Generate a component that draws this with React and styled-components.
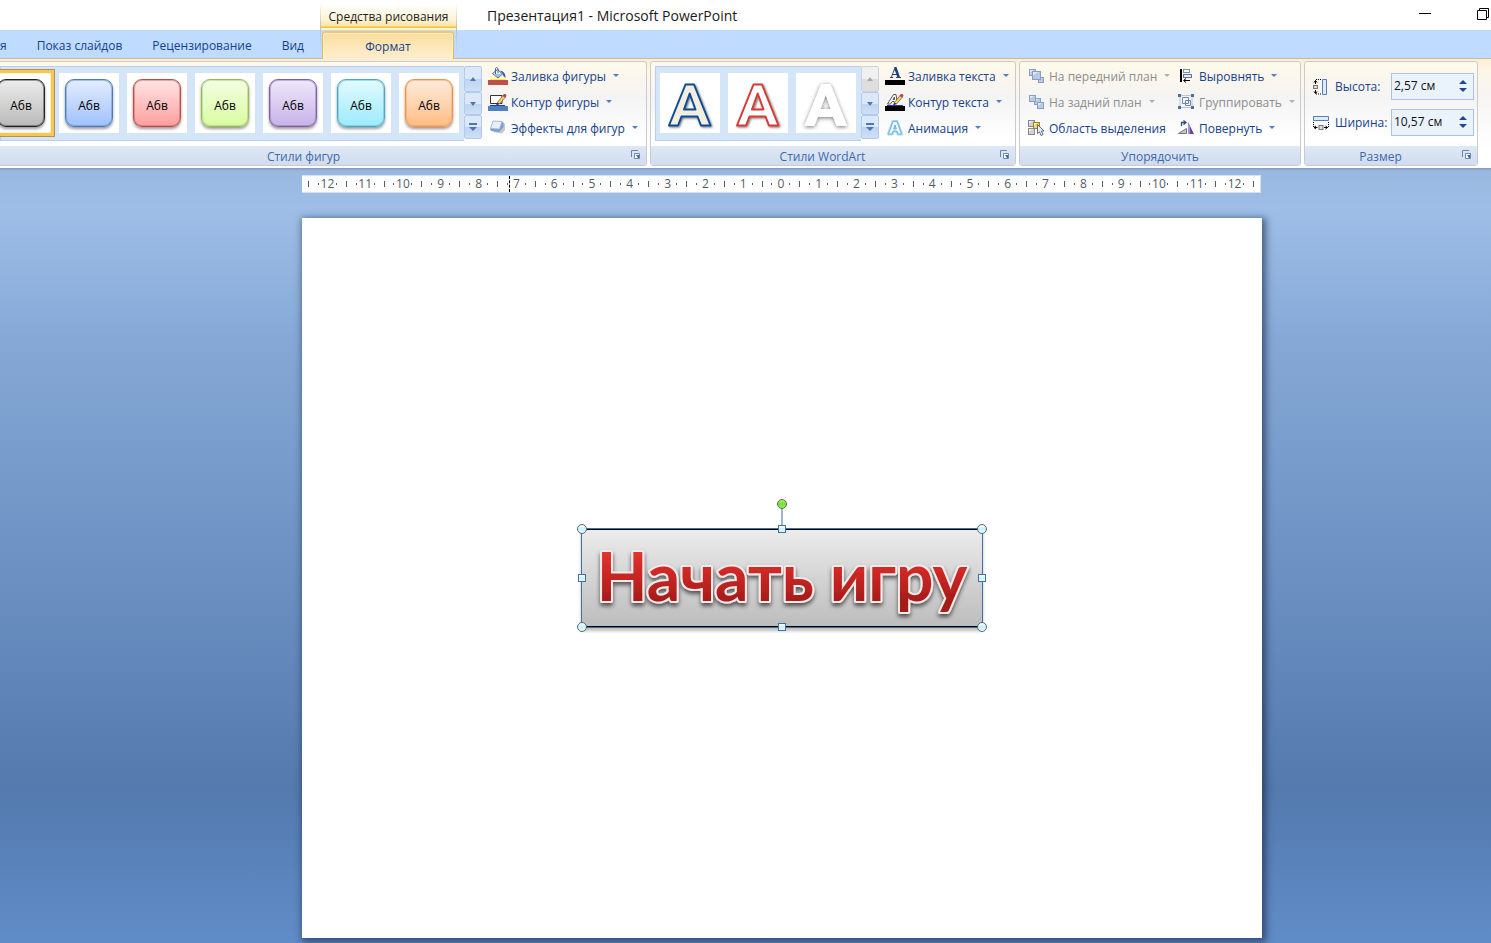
import React from "react";
import styled, { createGlobalStyle, css } from "styled-components";

const UI_FONT = '"Open Sans", "Noto Sans", sans-serif';

const GlobalStyle = createGlobalStyle`
  *, *::before, *::after { box-sizing: border-box; }
  body { margin: 0; font-family: ${UI_FONT}; font-size: 12px; overflow-x: hidden; }
  button, input { font: inherit; color: inherit; }
  button { margin: 0; padding: 0; border: 0; background: none; text-align: left; white-space: nowrap; }
  svg { display: block; flex: none; }
`;

const Window = styled.div`
  display: flex;
  flex-direction: column;
  min-height: 100vh;
  overflow: hidden;
`;

/* ---------- Title bar and tabs ---------- */

const TitleBar = styled.header`
  display: flex;
  align-items: center;
  height: 30px;
  padding-left: 320px;
  background: #fff;
`;

const ContextTitle = styled.div`
  position: relative;
  align-self: flex-end;
  width: 137px;
  height: 26px;
  padding-top: 3px;
  line-height: 20px;
  text-align: center;
  white-space: nowrap;
  color: #1e1e1e;
  background: linear-gradient(#fff, #fdf3d6 60%, #fbe3a4 86%, #f9c13c 87%, #f9c13c 93%, #fff3c8 94%);
  &::before, &::after {
    content: "";
    position: absolute;
    top: 0;
    width: 1px;
    height: 50px;
    background: linear-gradient(transparent, #c3c0b8 50%, transparent);
  }
  &::before { left: 0; }
  &::after { right: 0; }
`;

const DocumentTitle = styled.h1`
  flex: 1;
  margin: 0 0 0 30px;
  padding-top: 2px;
  font-size: 14px;
  font-weight: 400;
  line-height: 20px;
  white-space: nowrap;
  color: #1a1a1a;
`;

const WindowControls = styled.div`
  display: flex;
  gap: 46px;
  padding: 0 2px 2px 0;
`;

const TabRow = styled.nav`
  display: flex;
  align-items: flex-end;
  gap: 30px;
  height: 29px;
  background: #bfdbff;
  border-bottom: 1px solid #c4bba9;
`;

const Tab = styled.button`
  height: 26px;
  line-height: 24px;
  padding-top: 2px;
  color: #15428b;
  ${(p) => p.$active && css`
    align-self: stretch;
    width: 132px;
    height: 28px;
    margin: 1px 0 -1px -12px;
    padding-top: 1px;
    text-align: center;
    border: 1px solid #e2b864;
    border-top: 2px solid #f0c678;
    border-bottom: 0;
    border-radius: 4px 4px 0 0;
    box-shadow: inset 1px 1px 0 #fff0c8, inset -1px 0 0 #fff0c8;
    background: linear-gradient(#fbdc98, #fde7b8 50%, #fdeed0);
  `}
`;

/* ---------- Ribbon ---------- */

const Ribbon = styled.section`
  display: flex;
  gap: 3px;
  height: 109px;
  padding: 2px 0 2px;
  background: linear-gradient(#fdeed0, #fdf6e6 10%, #f6f5f4 35%, #fff 85%, #fff);
  border-bottom: 1px solid #fff;
`;

const RibbonEdge = styled.div`
  height: 3px;
  background: linear-gradient(#8199bd, #8fabd2 50%, #9ab6dc);
`;

const Group = styled.section`
  display: flex;
  flex-direction: column;
  flex: 0 0 ${(p) => p.$basis};
  height: 105px;
  overflow: hidden;
  border: 1px solid #cbcbcb;
  border-radius: ${(p) => (p.$cut ? "0 3px 3px 0" : "3px")};
  ${(p) => p.$cut && "border-left: 0;"}
  background: linear-gradient(#fffaec, #faf6ee 18%, #f4f4f4 35%, #fff 75%);
`;

const GroupBody = styled.div`
  display: flex;
  flex: 1;
  min-height: 0;
  padding: ${(p) => p.$pad || "0"};
`;

const GroupCaption = styled.footer`
  display: flex;
  align-items: center;
  gap: ${(p) => (p.$cut ? "24px" : "12px")};
  height: 19px;
  padding: 0 6px 0 ${(p) => (p.$cut ? "0" : "6px")};
  color: #3e6aaa;
  background: linear-gradient(#dfe8f5, #d0dcef);
`;

const CaptionText = styled.h2`
  flex: 1;
  margin: 0;
  padding-top: 2px;
  font-size: 12px;
  line-height: 16px;
  font-weight: 400;
  text-align: center;
`;

const Launcher = styled.button`
  padding-bottom: 2px;
`;

const Gallery = styled.div`
  display: flex;
  justify-content: flex-end;
  align-items: center;
  gap: 8px;
  flex: none;
  width: ${(p) => p.$width};
  height: 75px;
  margin-top: 4px;
  padding: 0 5px 1px 4px;
  border: 1px solid #b8cfee;
  border-right: 0;
  background: #d4e5f8;
`;

const GalleryItem = styled.button`
  display: grid;
  place-items: center;
  flex: none;
  width: 60px;
  height: 60px;
  background: #fff;
  ${(p) => p.$selected && css`
    outline: 3px solid #f7c65a;
    outline-offset: 0;
    box-shadow: 0 0 0 4px #b98e58, inset 0 0 0 1px #fff3c4;
  `}
`;

const Swatch = styled.span`
  display: grid;
  place-items: center;
  width: 48px;
  height: 48px;
  padding-top: 5px;
  border: 1px solid ${(p) => p.$line};
  border-radius: 9px;
  font-weight: 500;
  color: #000;
  background: linear-gradient(${(p) => p.$from}, ${(p) => p.$to});
  box-shadow: inset 0 0 0 1px ${(p) => p.$line}66, 0 2px 3px rgba(0, 0, 0, 0.4);
`;

const Scroller = styled.div`
  display: grid;
  grid-template-rows: 26px 23px 24px;
  flex: none;
  width: 18px;
  height: 73px;
  margin-top: 4px;
`;

const ScrollButton = styled.button`
  display: grid;
  place-items: center;
  border: 1px solid ${(p) => (p.disabled ? "#ccd3dc" : "#b3caec")};
  border-radius: 2px;
  background: ${(p) => (p.disabled
    ? "linear-gradient(#f0f0f0 50%, #dedede 50%)"
    : "linear-gradient(#dbe8fa 50%, #bdd3f1 50%, #cfe0f6)")};
`;

const Commands = styled.div`
  display: flex;
  flex-direction: column;
  padding-top: 1px;
  margin-left: ${(p) => p.$left || "0"};
  flex: 0 0 ${(p) => p.$basis || "auto"};
`;

const Command = styled.button`
  display: flex;
  align-items: center;
  gap: 3px;
  height: 26px;
  color: ${(p) => (p.disabled ? "#8d8d8d" : "#15428b")};
`;

const Arrow = styled.span`
  width: 0;
  margin: 0 0 2px 4px;
  border: 3px solid transparent;
  border-bottom: 0;
  border-top-color: ${(p) => (p.$off ? "#b0b0b0" : "#4f7fbf")};
`;

const SizeForm = styled.form`
  display: grid;
  grid-template-columns: 22px 56px 83px;
  grid-auto-rows: 27px;
  row-gap: 9px;
  align-items: center;
  padding: 11px 0 0 8px;
  color: #15428b;
`;

const SizeBox = styled.div`
  display: flex;
  align-items: center;
  height: 27px;
  padding-right: 5px;
  border: 1px solid #aac3e0;
  background: #eaf2fc;
`;

const SizeInput = styled.input`
  flex: 1;
  min-width: 0;
  height: 25px;
  padding: 0 0 2px 2px;
  border: 0;
  outline: 0;
  background: transparent;
  color: #111;
`;

const Spinner = styled.div`
  display: flex;
  flex-direction: column;
  gap: 4px;
  padding: 0 1px 2px 0;
`;

/* ---------- Workspace ---------- */

const Workspace = styled.main`
  flex: 1;
  display: grid;
  grid-template-columns: 302fr 960px 229fr;
  grid-template-rows: 18px auto;
  row-gap: 25px;
  align-content: start;
  padding: 4px 0 5px;
  background: linear-gradient(#9ab8df, #9ebee7 5%, #85a8d6 22%, #547aae 80%, #608cc7);
`;

const Ruler = styled.div`
  position: relative;
  grid-column: 2;
  display: flex;
  align-items: center;
  margin-right: 1px;
  padding: 0 6px;
  border: 1px solid #d5e0f0;
  border-left: 0;
  background: #fff;
  color: #555b66;
`;

const Tick = styled.span`
  width: 1px;
  height: 6px;
  background: #5c5c66;
`;

const RulerCell = styled.span`
  display: flex;
  align-items: center;
  justify-content: center;
  flex: 1 1 0;
  line-height: 16px;
`;

const RulerNumber = styled.span`
  width: 17px;
  text-align: center;
`;

const Dot = styled.span`
  width: 1px;
  height: 2px;
  background: #5c5c66;
`;

const CursorMark = styled.span`
  position: absolute;
  top: 0;
  bottom: 0;
  left: 207px;
  border-left: 1px dashed #000;
`;

const Slide = styled.article`
  grid-column: 2;
  display: grid;
  place-items: center;
  min-height: 720px;
  background: #fff;
  box-shadow: 2px 2px 7px 2px rgba(20, 35, 65, 0.6);
`;

const Shape = styled.div`
  position: relative;
  width: 402px;
  height: 100px;
  border: 1px solid #44709f;
  background: linear-gradient(#ececec, #bcbcbc);
  box-shadow: inset 0 1px 0 #000, inset 0 -1px 0 #000, 0 3px 3px rgba(0, 0, 0, 0.25);
`;

const Handle = styled.span`
  position: absolute;
  left: ${(p) => p.$x};
  top: ${(p) => p.$y};
  width: ${(p) => (p.$round ? "10px" : "8px")};
  height: ${(p) => (p.$round ? "10px" : "8px")};
  transform: translate(-50%, -50%);
  border: 1px solid ${(p) => (p.$round ? "#566a76" : "#41719c")};
  border-radius: ${(p) => (p.$round ? "50%" : "0")};
  background: ${(p) => (p.$green
    ? "linear-gradient(#b4f06c, #77e022 50%, #a0ee58)"
    : "linear-gradient(#fff, #c8f1fa 50%, #e6fbff)")};
`;

const RotateStem = styled.span`
  position: absolute;
  left: 50%;
  top: -21px;
  width: 2px;
  height: 20px;
  margin-left: -1px;
  background: #9cb3cd;
`;

/* ---------- Drawings ---------- */

const WordArt = () => (
  <svg width="400" height="98" viewBox="0 0 400 98">
    <defs>
      <linearGradient id="waFill" x1="0" y1="0" x2="0" y2="1">
        <stop offset="0.2" stopColor="#e2332e" />
        <stop offset="0.5" stopColor="#c92724" />
        <stop offset="0.85" stopColor="#a31b18" />
      </linearGradient>
      <filter id="waShadow" x="-5%" y="-20%" width="110%" height="150%">
        <feDropShadow dx="0" dy="3" stdDeviation="2" floodColor="#000" floodOpacity="0.6" />
      </filter>
    </defs>
    <g fontFamily="Lato, Carlito, sans-serif" fontWeight="700" fontSize="66" textAnchor="middle" strokeLinejoin="round">
      <text x="200" y="72" filter="url(#waShadow)" fill="url(#waFill)" stroke="#f6e9e9" strokeWidth="4" paintOrder="stroke">
        Начать игру
      </text>
    </g>
  </svg>
);

const BigA = ({ fill, stroke, width, id, shadow }) => (
  <svg width="60" height="60" viewBox="0 0 60 60" aria-label="A">
    <defs>
      <filter id={id} x="-20%" y="-20%" width="140%" height="140%">
        <feDropShadow dx={shadow ? 0 : 1} dy="1" stdDeviation={shadow || 1} floodColor="#000" floodOpacity="0.55" />
      </filter>
    </defs>
    <path
      d="M25.500 11.500H34L50.500 52.500H41L37.500 43.500H21.500L18 52.500H9ZM29.700 20.500L24 36.500H35.500Z"
      fill={fill} fillRule="evenodd" stroke={stroke} strokeWidth={width} strokeLinejoin="round" filter={`url(#${id})`}
    />
  </svg>
);

const Pencil = () => (
  <g>
    <path d="M9 11L15 3.500L17.500 5L11.500 12Z" fill="#f1d27a" stroke="#6b4a1c" strokeWidth=".7" />
    <path d="M14.500 3.800L16 2Q18.500 1.500 18.500 4L17 5.500Z" fill="#b4453a" />
    <path d="M9 11L11.500 12L8 13.500Z" fill="#222" />
  </g>
);

const FillShapeIcon = () => (
  <svg width="20" height="20" viewBox="0 0 20 20">
    <path d="M4.500 7.500L9.500 3.500L14.500 8L10 12Z" fill="#f3f8fe" stroke="#4c6184" />
    <path d="M6 8L13.500 7.500L10 11.500Z" fill="#9dbbe0" />
    <path d="M7.500 8V2.500Q8.500 .5 10 2.500V7" fill="none" stroke="#4c6184" />
    <path d="M12 4.500Q17.500 5 17.500 12Q15 11 14.500 7.500Z" fill="#2f5c9a" />
    <path d="M2 13.500H18" stroke="#fff200" />
    <path d="M0 14H20V19H0Z" fill="#c0504d" />
  </svg>
);

const OutlineShapeIcon = () => (
  <svg width="20" height="20" viewBox="0 0 20 20">
    <path d="M2.500 3.500H14V11.500H2.500Z" fill="#fff" stroke="#333" />
    <Pencil />
    <path d="M2 13.500H17" stroke="#2430e0" />
    <path d="M0 14H20V19H0Z" fill="#4f81bd" />
  </svg>
);

const EffectsIcon = () => (
  <svg width="20" height="20" viewBox="0 0 20 20">
    <path d="M5 14L14 15.500L17 12V6L15 4Z" fill="#9a9a9a" opacity=".55" />
    <path d="M5 3L14 3.500L15.500 5V9L11 14L3.500 13L2 11.500Z" fill="#7d9dd0" />
    <path d="M5 3L14 3.500L11.500 11L2.500 10.500Z" fill="#e6effb" stroke="#9db5da" strokeWidth=".8" />
  </svg>
);

const FillTextIcon = () => (
  <svg width="20" height="20" viewBox="0 0 20 20">
    <path d="M9.500 1H11.500L15 11H16V12H11V11H12.200L11.500 9H7.600L7 11H8.200V12H5V11H6L9 3ZM8 8H11.200L9.700 4Z" fill="#234479" fillRule="evenodd" />
    <path d="M0 14H20V19H0Z" />
  </svg>
);

const OutlineTextIcon = () => (
  <svg width="20" height="20" viewBox="0 0 20 20">
    <path d="M8.500 2.500H11L12 9L10 12L9 9.500H7L5.500 12H2.500ZM8 7.500H9.500V5Z" fill="#fff" stroke="#555" />
    <Pencil />
    <path d="M2 13.500H18" stroke="#2430e0" />
    <path d="M0 14H20V19H0Z" />
  </svg>
);

const TextEffectsIcon = () => (
  <svg width="20" height="20" viewBox="0 0 20 20">
    <path d="M8 3.500H12L16.500 16H13L12 13H8L7 16H3.500ZM10 7L8.700 11H11.300Z" fill="#fff" fillRule="evenodd" stroke="#a4d9f6" strokeWidth="3" strokeLinejoin="round" />
    <path d="M8 3.500H12L16.500 16H13L12 13H8L7 16H3.500ZM10 7L8.700 11H11.300Z" fill="#eef8ff" fillRule="evenodd" stroke="#6aaad6" strokeWidth=".9" />
  </svg>
);

const squareTones = {
  blue: ["#b7cbe6", "#8a9fbf"],
  warm: ["#f8d36b", "#a77e22"],
  grey: ["#cfd2d8", "#85888f"],
};

const StackSquare = ({ x, y, s, tone = "blue" }) => (
  <g>
    <rect x={x} y={y} width={s} height={s} fill={squareTones[tone][0]} stroke={squareTones[tone][1]} />
    <path d={`M${Number(x) + 0.5} ${Number(y) + s / 2}V${Number(y) + 0.5}H${Number(x) + s * 0.7}Z`} fill="#fff" opacity=".6" />
  </g>
);

const FrontIcon = () => (
  <svg width="18" height="18" viewBox="0 0 18 18">
    <StackSquare x="1.500" y="2.500" s={6} /><StackSquare x="10.500" y="10.500" s={5} /><StackSquare x="4.500" y="4.500" s={8} />
  </svg>
);

const BackIcon = () => (
  <svg width="18" height="18" viewBox="0 0 18 18">
    <StackSquare x="6.500" y="5.500" s={6} /><StackSquare x="1.500" y="2.500" s={6} /><StackSquare x="9.500" y="9.500" s={6} />
  </svg>
);

const SelectionIcon = () => (
  <svg width="18" height="18" viewBox="0 0 18 18">
    <StackSquare x=".5" y="1.500" s={6} tone="grey" /><StackSquare x=".5" y="9.500" s={6} tone="grey" /><StackSquare x="5.500" y="3.500" s={6} tone="warm" />
    <path d="M9.500 5.500V14.500L11.500 12.800L13 16.500L15 15.500L13.500 12H16Z" fill="#e4ecf8" stroke="#4c6184" strokeWidth=".9" />
  </svg>
);

const AlignIcon = () => (
  <svg width="18" height="18" viewBox="0 0 18 18">
    <path d="M2 2H4V15H2Z" />
    <rect x="5.500" y="2.500" width="6" height="3" fill="#fff" stroke="#7d8fa8" />
    <rect x="5.500" y="7.500" width="8" height="3" fill="#dfeaf7" stroke="#5e789c" />
    <path d="M12 13.500H6M8 11.500L5.500 13.500L8 15.500" fill="none" stroke="#000" />
  </svg>
);

const GroupIcon = () => (
  <svg width="18" height="18" viewBox="0 0 18 18">
    <path d="M2 2.500H14V14.500H2Z" fill="none" stroke="#b9c6da" />
    <path d="M4.500 4.500H10.500V10.500H4.500ZM7.500 7.500H12.500V12.500H7.500Z" fill="none" stroke="#6e88b0" />
    <path d="M0 1H3V4H0ZM13 1H16V4H13ZM0 13H3V16H0ZM13 13H16V16H13Z" fill="#506d9b" />
  </svg>
);

const RotateIcon = () => (
  <svg width="18" height="18" viewBox="0 0 18 18">
    <path d="M.5 14.500L8.500 9.500V14.500Z" fill="#c9c9c9" stroke="#70757d" />
    <path d="M10 15V3L16 15Z" fill="#65459a" />
    <path d="M10 15V3L12 7V15Z" fill="#a98bd0" />
    <path d="M3.500 7V3.500H7M5.500 1.500L8 3.500L5.500 5.500" fill="none" stroke="#2c4f86" strokeWidth="1.300" />
  </svg>
);

const HeightIcon = () => (
  <svg width="16" height="16" viewBox="0 0 16 16">
    <path d="M9.500 .5H13.500V15.500H9.500Z" fill="#dceafc" stroke="#5a7dae" />
    <path d="M3 .5H9M3 15H9" stroke="#000" strokeDasharray="1 1" />
    <path d="M1 3.500L2.500 1.500L4 3.500M2.500 1.500V5M1 12.500L2.500 14.500L4 12.500M2.500 14.500V11" fill="none" stroke="#000" />
    <rect x=".5" y="6.500" width="4" height="3" fill="#ddd" stroke="#777" />
  </svg>
);

const WidthIcon = () => (
  <svg width="16" height="16" viewBox="0 0 16 16">
    <path d="M.5 1.500H15.500V5.500H.5Z" fill="#dceafc" stroke="#5a7dae" />
    <path d="M.5 7V12M15.500 7V12" stroke="#000" strokeDasharray="1 1" />
    <path d="M3 11L1 12.500L3 14M1 12.500H4.500M12.500 11L14.500 12.500L12.500 14M14.500 12.500H11" fill="none" stroke="#000" />
    <rect x="6" y="10.500" width="4" height="4" fill="#ddd" stroke="#777" />
  </svg>
);

const LauncherIcon = () => (
  <svg width="9" height="9" viewBox="0 0 9 9">
    <path d="M.5 7V.5H7" fill="none" stroke="#6587b0" />
    <path d="M3.500 3.500H8.500V8.500H3.500Z" fill="#fff" stroke="#6587b0" />
    <path d="M5 5H8V8H7Z" fill="#46688f" />
  </svg>
);

const SpinArrow = ({ down }) => (
  <svg width="8" height="4" viewBox="0 0 8 4">
    <path d={down ? "M0 0H8L4 4Z" : "M0 4H8L4 0Z"} fill="#1c4a92" />
  </svg>
);

/* ---------- Parts ---------- */

const shapeStyles = [
  { name: "Чёрный", from: "#ececec", to: "#bababa", line: "#222222" },
  { name: "Синий", from: "#e3edff", to: "#a0c1ff", line: "#4a7ebb" },
  { name: "Красный", from: "#ffe5e4", to: "#ff9f9d", line: "#be4b48" },
  { name: "Зелёный", from: "#f4ffe4", to: "#d8fba0", line: "#98b954" },
  { name: "Фиолетовый", from: "#efe8fa", to: "#c8b2e8", line: "#7d60a0" },
  { name: "Голубой", from: "#e2fbff", to: "#9ceaff", line: "#46aac5" },
  { name: "Оранжевый", from: "#ffebdc", to: "#ffbd84", line: "#f69240" },
];

const GalleryScroller = ({ topOff }) => (
  <Scroller>
    <ScrollButton aria-label="Вверх" disabled={topOff}>
      <svg width="6" height="4"><path d="M0 4H6L3 0Z" fill={topOff ? "#a8a8a8" : "#4a78b5"} /></svg>
    </ScrollButton>
    <ScrollButton aria-label="Вниз">
      <svg width="6" height="4"><path d="M0 0H6L3 4Z" fill="#4a78b5" /></svg>
    </ScrollButton>
    <ScrollButton aria-label="Дополнительно">
      <svg width="8" height="8"><path d="M0 0H8V2H0ZM0 4H8L4 8Z" fill="#4a78b5" /></svg>
    </ScrollButton>
  </Scroller>
);

const MenuCommand = ({ icon, label, off, plain }) => (
  <Command disabled={off}>
    {icon}
    {label}
    {!plain && <Arrow $off={off} />}
  </Command>
);

const Caption = ({ children, launcher, cut }) => (
  <GroupCaption $cut={cut}>
    <CaptionText>{children}</CaptionText>
    {launcher && <Launcher aria-label="Параметры"><LauncherIcon /></Launcher>}
  </GroupCaption>
);

const SizeField = ({ id, icon, label, value }) => (
  <>
    {icon}
    <label htmlFor={id}>{label}</label>
    <SizeBox>
      <SizeInput id={id} defaultValue={value} />
      <Spinner>
        <button type="button" aria-label="Больше"><SpinArrow /></button>
        <button type="button" aria-label="Меньше"><SpinArrow down /></button>
      </Spinner>
    </SizeBox>
  </>
);

const rulerNumbers = Array.from({ length: 25 }, (_, i) => Math.abs(i - 12));

const handles = [
  { x: "0%", y: "0%", round: true }, { x: "50%", y: "0%" }, { x: "100%", y: "0%", round: true },
  { x: "0%", y: "50%" }, { x: "100%", y: "50%" },
  { x: "0%", y: "100%", round: true }, { x: "50%", y: "100%" }, { x: "100%", y: "100%", round: true },
];

export default function App() {
  return (
    <Window>
      <GlobalStyle />
      <TitleBar>
        <ContextTitle>Средства рисования</ContextTitle>
        <DocumentTitle>Презентация1 - Microsoft PowerPoint</DocumentTitle>
        <WindowControls>
          <button aria-label="Свернуть">
            <svg width="12" height="12"><path d="M0 5.500H12" stroke="#000" /></svg>
          </button>
          <button aria-label="Восстановить">
            <svg width="12" height="12">
              <path d="M.5 2.500H9.500V11.500H.5ZM2.500 2V.5H11.500V9.500H10" fill="none" stroke="#000" />
            </svg>
          </button>
        </WindowControls>
      </TitleBar>

      <TabRow>
        <Tab>я</Tab>
        <Tab>Показ слайдов</Tab>
        <Tab>Рецензирование</Tab>
        <Tab>Вид</Tab>
        <Tab $active>Формат</Tab>
      </TabRow>

      <Ribbon>
        <Group $basis="647px" $cut>
          <GroupBody>
            <Gallery $width="464px">
              {shapeStyles.map((s, i) => (
                <GalleryItem key={s.name} $selected={i === 0} aria-label={s.name}>
                  <Swatch $from={s.from} $to={s.to} $line={s.line}>Абв</Swatch>
                </GalleryItem>
              ))}
            </Gallery>
            <GalleryScroller />
            <Commands $left="6px">
              <MenuCommand icon={<FillShapeIcon />} label="Заливка фигуры" />
              <MenuCommand icon={<OutlineShapeIcon />} label="Контур фигуры" />
              <MenuCommand icon={<EffectsIcon />} label="Эффекты для фигур" />
            </Commands>
          </GroupBody>
          <Caption launcher cut>Стили фигур</Caption>
        </Group>

        <Group $basis="366px">
          <GroupBody $pad="0 0 0 4px">
            <Gallery $width="206px">
              <GalleryItem aria-label="Бежевая заливка"><BigA id="a1" fill="#f3eee0" stroke="#0f4c94" width="2" /></GalleryItem>
              <GalleryItem aria-label="Красный контур"><BigA id="a2" fill="#fff" stroke="#d63a36" width="2" /></GalleryItem>
              <GalleryItem aria-label="Белая заливка"><BigA id="a3" fill="#fff" stroke="#fff" width="1" shadow="2" /></GalleryItem>
            </Gallery>
            <GalleryScroller topOff />
            <Commands $left="6px">
              <MenuCommand icon={<FillTextIcon />} label="Заливка текста" />
              <MenuCommand icon={<OutlineTextIcon />} label="Контур текста" />
              <MenuCommand icon={<TextEffectsIcon />} label="Анимация" />
            </Commands>
          </GroupBody>
          <Caption launcher>Стили WordArt</Caption>
        </Group>

        <Group $basis="282px">
          <GroupBody $pad="0 0 0 8px">
            <Commands $basis="150px">
              <MenuCommand off icon={<FrontIcon />} label="На передний план" />
              <MenuCommand off icon={<BackIcon />} label="На задний план" />
              <MenuCommand plain icon={<SelectionIcon />} label="Область выделения" />
            </Commands>
            <Commands>
              <MenuCommand icon={<AlignIcon />} label="Выровнять" />
              <MenuCommand off icon={<GroupIcon />} label="Группировать" />
              <MenuCommand icon={<RotateIcon />} label="Повернуть" />
            </Commands>
          </GroupBody>
          <Caption>Упорядочить</Caption>
        </Group>

        <Group $basis="174px">
          <GroupBody>
            <SizeForm>
              <SizeField id="h" icon={<HeightIcon />} label="Высота:" value="2,57 см" />
              <SizeField id="w" icon={<WidthIcon />} label="Ширина:" value="10,57 см" />
            </SizeForm>
          </GroupBody>
          <Caption launcher>Размер</Caption>
        </Group>
      </Ribbon>
      <RibbonEdge />

      <Workspace>
        <Ruler>
          <Tick />
          {rulerNumbers.map((n, i) => (
            <React.Fragment key={i}>
              <RulerCell><Dot /><RulerNumber>{n}</RulerNumber><Dot /></RulerCell>
              <Tick />
            </React.Fragment>
          ))}
          <CursorMark />
        </Ruler>
        <Slide>
          <Shape>
            <WordArt />
            <RotateStem />
            <Handle $round $green $x="50%" $y="-25px" />
            {handles.map((h, i) => (
              <Handle key={i} $x={h.x} $y={h.y} $round={h.round} />
            ))}
          </Shape>
        </Slide>
      </Workspace>
    </Window>
  );
}
